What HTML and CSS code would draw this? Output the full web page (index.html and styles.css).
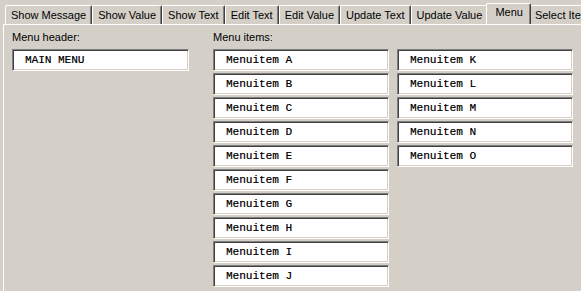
FILE: index.html
```html
<!DOCTYPE html>
<html lang="en">
<head>
    <meta charset="UTF-8">
    <title>Menu</title>
    <link rel="stylesheet" href="styles.css">
</head>
<body>
    <div class="tabs">
        <div class="tab">Show Message</div>
        <div class="tab">Show Value</div>
        <div class="tab">Show Text</div>
        <div class="tab">Edit Text</div>
        <div class="tab">Edit Value</div>
        <div class="tab">Update Text</div>
        <div class="tab">Update Value</div>
        <div class="tab active">Menu</div>
        <div class="tab">Select Item</div>
    </div>

    <div class="panel">
        <div class="group header-group">
            <div class="label">Menu header:</div>
            <div class="field">MAIN MENU</div>
        </div>
        <div class="group">
            <div class="label">Menu items:</div>
            <div class="items">
                <div class="field">Menuitem A</div>
                <div class="field">Menuitem B</div>
                <div class="field">Menuitem C</div>
                <div class="field">Menuitem D</div>
                <div class="field">Menuitem E</div>
                <div class="field">Menuitem F</div>
                <div class="field">Menuitem G</div>
                <div class="field">Menuitem H</div>
                <div class="field">Menuitem I</div>
                <div class="field">Menuitem J</div>
                <div class="field">Menuitem K</div>
                <div class="field">Menuitem L</div>
                <div class="field">Menuitem M</div>
                <div class="field">Menuitem N</div>
                <div class="field">Menuitem O</div>
            </div>
        </div>
    </div>
</body>
</html>
```

FILE: styles.css
```css
body {
    display: flex;
    flex-direction: column;
    height: 100vh;
    background-color: #d4d0c8;
    color: #000000;
    font-family: "Liberation Sans", Arial, sans-serif;
    font-size: 11px;
    margin: 0;
    overflow: hidden;
}
.tabs {
    display: flex;
    flex: none;
    align-items: flex-end;
    height: 24px;
    padding-left: 5px;
    white-space: nowrap;
    overflow: hidden;
}
.tab {
    flex: none;
    height: 18px;
    line-height: 18px;
    padding: 0 5px;
    border-top: 1px solid #ffffff;
    border-left: 1px solid #ffffff;
    border-right: 1px solid #404040;
    border-radius: 2px 2px 0 0;
    box-shadow: inset -1px 0 #808080;
}
.tab.active {
    position: relative;
    z-index: 1;
    height: 21px;
    line-height: 17px;
    margin: 0 -2px -1px -2px;
    padding: 0 7px 0 8px;
    background-color: #d4d0c8;
}
.panel {
    display: flex;
    flex: 1;
    min-height: 0;
    gap: 24px;
    margin-left: 3px;
    padding: 6px 0 0 8px;
    border-top: 1px solid #ffffff;
    border-left: 1px solid #ffffff;
}
.label {
    height: 13px;
    line-height: 13px;
    margin-bottom: 5px;
}
.header-group .field {
    width: 177px;
}
.items {
    display: grid;
    grid-auto-flow: column;
    grid-template-rows: repeat(10, 22px);
    grid-template-columns: 176px 176px;
    gap: 2px 8px;
}
.field {
    box-sizing: border-box;
    height: 22px;
    line-height: 20px;
    padding-left: 12px;
    background-color: #ffffff;
    border: 1px solid;
    border-color: #808080 #ffffff #ffffff #808080;
    box-shadow: inset 1px 1px #404040, inset -1px -1px #d4d0c8;
    font-family: "Liberation Mono", "Courier New", monospace;
    font-size: 11px;
    text-shadow: 0.3px 0 0 rgba(0, 0, 0, 0.5);
}
```
